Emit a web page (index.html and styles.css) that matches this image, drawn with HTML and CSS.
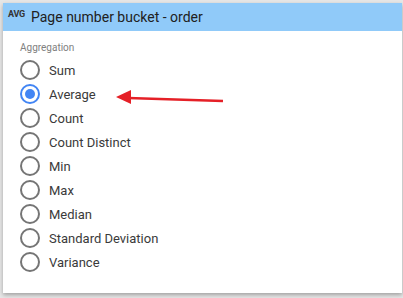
FILE: index.html
```html
<!DOCTYPE html>
<html>
<head>
  <meta charset="UTF-8">
  <title>Aggregation</title>
  <link rel="stylesheet" href="styles.css">
</head>
<body>
  <div class="panel">
    <div class="panel-head">
      <span class="badge">AVG</span>
      <span class="title">Page number bucket - order</span>
    </div>
    <div class="panel-body">
      <p class="label">Aggregation</p>
      <ul class="options">
        <li><span class="radio"></span>Sum</li>
        <li class="selected"><span class="radio"></span>Average</li>
        <li><span class="radio"></span>Count</li>
        <li><span class="radio"></span>Count Distinct</li>
        <li><span class="radio"></span>Min</li>
        <li><span class="radio"></span>Max</li>
        <li><span class="radio"></span>Median</li>
        <li><span class="radio"></span>Standard Deviation</li>
        <li><span class="radio"></span>Variance</li>
      </ul>
    </div>
    <svg class="arrow" width="110" height="20" viewBox="0 0 110 20">
      <line x1="12" y1="9" x2="107" y2="12" stroke="#e52027" stroke-width="2.4"/>
      <polygon points="0,8 15,1 15,15" fill="#e52027"/>
    </svg>
  </div>
</body>
</html>
```

FILE: styles.css
```css
* {
  box-sizing: border-box;
}
body {
  margin: 0;
  background-color: #e6e6e6;
  font-family: Roboto, 'Noto Sans', sans-serif;
  height: 298px;
  overflow: hidden;
}
.panel {
  position: relative;
  margin: 3px 1px 0 3px;
  height: 290px;
  background: #fff;
  box-shadow: 0 2px 4px rgba(0, 0, 0, 0.3);
}
.panel-head {
  display: flex;
  align-items: center;
  height: 28px;
  background: #90caf9;
  padding-left: 5px;
}
.badge {
  font-size: 9px;
  font-weight: bold;
  color: #333;
  width: 23px;
  margin-top: -6px;
  letter-spacing: -0.2px;
}
.title {
  font-size: 14px;
  color: #212121;
}
.panel-body {
  padding: 11px 0 0 17px;
}
.label {
  margin: 0 0 5px;
  font-size: 10px;
  color: #808080;
}
.options {
  list-style: none;
  margin: 0;
  padding: 0;
}
.options li {
  display: flex;
  align-items: center;
  height: 24px;
  font-size: 13px;
  color: #3a3a3a;
}
.radio {
  width: 20px;
  height: 20px;
  border: 2px solid #757575;
  border-radius: 50%;
  margin-right: 9px;
  display: flex;
  align-items: center;
  justify-content: center;
}
.selected .radio {
  border-color: #4285f4;
}
.selected .radio::after {
  content: "";
  width: 10px;
  height: 10px;
  border-radius: 50%;
  background: #4285f4;
}
.arrow {
  position: absolute;
  left: 113px;
  top: 86px;
}
```
